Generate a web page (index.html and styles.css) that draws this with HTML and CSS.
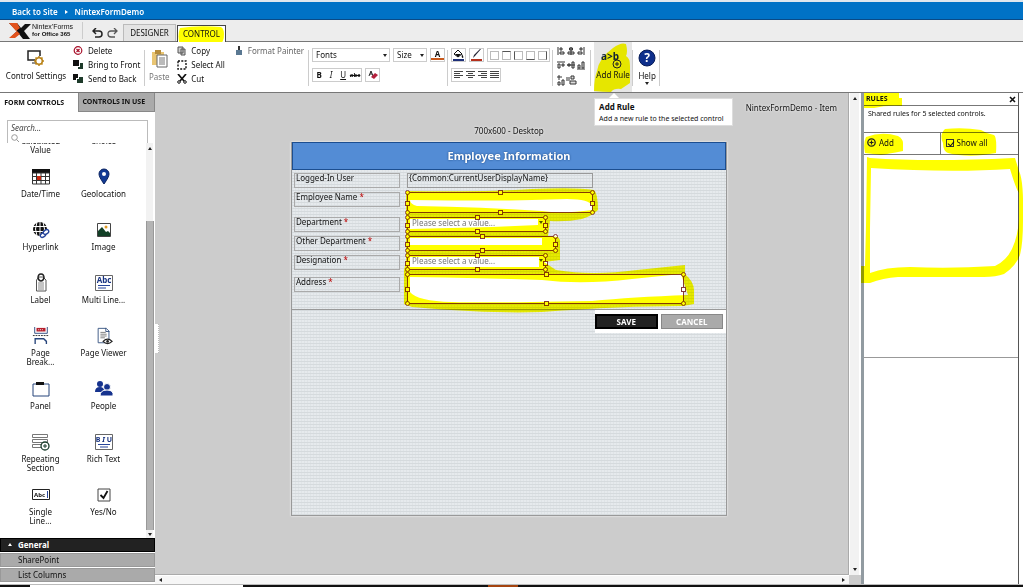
FILE: index.html
```html
<!DOCTYPE html>
<html lang="en">
<head>
    <meta charset="UTF-8">
    <meta name="viewport" content="width=device-width, initial-scale=1.0">
    <link rel="stylesheet" href="styles.css">
    <title>Nintex Forms - NintexFormDemo</title>
</head>
<body>
    <nav class="sitebar">
        <a href="#">Back to Site</a>
        <span class="sitebar__arrow"></span>
        <a href="#">NintexFormDemo</a>
    </nav>

    <header class="tabs">
        <div class="logo">
            <svg width="22" height="16" viewBox="0 0 22 16"><path d="M0 0h8l4 5 4-4h6l-7 7 6 8h-7l-4-5-5 4H1l7-7z" fill="#111"/><path d="M0 0h8l3 5-4 3zM8 8l3 3-5 4H0z" fill="#e2531d"/></svg>
            <span class="logo__text">Nintex'Forms<br><b>for Office 365</b></span>
        </div>
        <button class="undo" aria-label="Undo"><svg width="11" height="11" viewBox="0 0 11 11"><path d="M4 0L1 3l3 3M1 3h6q3 0 3 3t-3 3H3" fill="none" stroke="#222" stroke-width="1.5"/></svg></button>
        <button class="undo" aria-label="Redo"><svg width="11" height="11" viewBox="0 0 11 11"><path d="M7 0l3 3-3 3M10 3H4Q1 3 1 6t3 3h4" fill="none" stroke="#555" stroke-width="1.3"/></svg></button>
        <button class="tab">DESIGNER</button>
        <button class="tab tab--active">
            <svg class="marker" width="47" height="20" viewBox="0 0 47 20"><path d="M2 2Q20-1 43 1q3 2 3 7 0 8-4 10-18 2-40 1Q-1 10 2 2z"/></svg>
            <span>CONTROL</span>
        </button>
    </header>

    <section class="ribbon">
        <div class="group group--first">
            <button class="big big--settings">
                <svg width="18" height="18" viewBox="0 0 18 18"><path d="M8 11H1V2h12v5" fill="none" stroke="#222" stroke-width="1.5"/><path d="M5 14h4" stroke="#222"/><circle cx="12" cy="12" r="3.3" fill="#fff" stroke="#b98318" stroke-width="1.6"/><path d="M12 7v2m0 6v2M7 12h2m6 0h2M8.500 8.500l1.500 1.500m4 4l1.500 1.500m0-7L14 10m-4 4l-1.500 1.500" stroke="#b98318" stroke-width="1.500"/></svg>
                <span>Control Settings</span>
            </button>
            <div class="stack">
                <button class="cmd"><svg width="11" height="10" viewBox="0 0 11 10"><circle cx="5" cy="4.500" r="3.800" fill="#fff" stroke="#a8102a" stroke-width="1.200"/><path d="M3.500 3l3 3m0-3l-3 3" stroke="#a8102a" stroke-width="1.200"/></svg>Delete</button>
                <button class="cmd"><svg width="11" height="10" viewBox="0 0 11 10"><path d="M0 0h6v6H0z" fill="#111"/><path d="M7 3h3v6H5V7h2z" fill="#1d3a2a"/></svg>Bring to Front</button>
                <button class="cmd"><svg width="11" height="10" viewBox="0 0 11 10"><path d="M0 0h5v4H3v2H0z" fill="#111"/><path d="M6 3h4v6H4V5h2z" fill="#1d3a2a"/></svg>Send to Back</button>
            </div>
        </div>
        <div class="group">
            <button class="big big--off">
                <svg width="17" height="19" viewBox="0 0 17 19"><path d="M1 3h12v13H1z" fill="#e9c573"/><path d="M4 1h6v4H4z" fill="#b58c3c"/><path d="M6 6h10v12H6z" fill="#fff" stroke="#666"/><path d="M8 9h6m-6 2h6m-6 2h6m-6 2h6" stroke="#777"/></svg>
                <span>Paste</span>
            </button>
            <div class="stack">
                <button class="cmd"><svg width="10" height="10" viewBox="0 0 10 10"><path d="M1 1h5v6H1zM4 3h4v6H4z" fill="#ccc" stroke="#555"/></svg>Copy</button>
                <button class="cmd"><svg width="10" height="10" viewBox="0 0 10 10"><path d="M1 1h8v8H1z" fill="none" stroke="#111" stroke-width="1.400" stroke-dasharray="2 1.300"/></svg>Select All</button>
                <button class="cmd"><svg width="10" height="10" viewBox="0 0 10 10"><path d="M1 0l6 7M9 0L3 7" stroke="#111" stroke-width="1.700"/><circle cx="2" cy="8" r="1.300" fill="none" stroke="#111"/><circle cx="8" cy="8" r="1.300" fill="none" stroke="#111"/></svg>Cut</button>
            </div>
            <div class="stack">
                <button class="cmd cmd--off"><svg width="10" height="10" viewBox="0 0 10 10"><path d="M4 0h2v4H4z" fill="#333"/><path d="M2 4h6v5H2z" fill="#5a7892"/></svg>Format Painter</button>
            </div>
        </div>
        <div class="group">
            <div class="tools">
                <div class="tools__row">
                    <label class="picker picker--fonts"><select aria-label="Fonts"><option>Fonts</option></select></label>
                    <label class="picker picker--size"><select aria-label="Size"><option>Size</option></select></label>
                    <button class="tool tool--color">A</button>
                </div>
                <div class="tools__row">
                    <div class="toolset">
                        <button><b>B</b></button><button><i>I</i></button><button><u>U</u></button><button><s>abc</s></button>
                    </div>
                    <button class="tool" aria-label="Clear format"><svg width="10" height="10" viewBox="0 0 10 10"><path d="M1 6l2-5 2 5M2 4h2" fill="none" stroke="#222"/><path d="M3 7l4-4 3 2-4 4z" fill="#b3203c"/></svg></button>
                </div>
            </div>
        </div>
        <div class="group">
            <div class="tools">
                <div class="tools__row">
                    <button class="tool" aria-label="Fill"><svg width="11" height="12" viewBox="0 0 11 12"><path d="M1 5l4-4 4 4-4 3z" fill="#fff" stroke="#111"/><path d="M2 5h6L5 8zM9 5q2 3 1 4-2 0-1-4z" fill="#111"/><path d="M0 10h11v2H0z" fill="#1d2f78"/></svg></button>
                    <button class="tool" aria-label="Line colour"><svg width="11" height="12" viewBox="0 0 11 12"><path d="M10 0L4 7 2 9l1-3 6-6z" fill="#223"/><path d="M0 10h11v2H0z" fill="#b5301c"/></svg></button>
                    <div class="toolset toolset--boxes">
                        <button class="bx" aria-label="No border"></button><button class="bx bx--t" aria-label="Top border"></button><button class="bx bx--l" aria-label="Left border"></button><button class="bx bx--b" aria-label="Bottom border"></button><button class="bx bx--r" aria-label="Right border"></button>
                    </div>
                </div>
                <div class="tools__row">
                    <div class="toolset">
                        <button aria-label="Left"><svg width="9" height="8" viewBox="0 0 9 8"><path d="M0 .5h9M0 2.500h6M0 4.500h9M0 6.500h6" stroke="#444"/></svg></button>
                        <button aria-label="Centre"><svg width="9" height="8" viewBox="0 0 9 8"><path d="M0 .5h9M2 2.500h5M0 4.500h9M2 6.500h5" stroke="#444"/></svg></button>
                        <button aria-label="Right"><svg width="9" height="8" viewBox="0 0 9 8"><path d="M0 .5h9M3 2.500h6M0 4.500h9M3 6.500h6" stroke="#444"/></svg></button>
                        <button aria-label="Justify"><svg width="9" height="8" viewBox="0 0 9 8"><path d="M0 .5h9M0 2.500h9M0 4.500h9M0 6.500h9" stroke="#444"/></svg></button>
                    </div>
                </div>
            </div>
        </div>
        <div class="group group--align">
            <div class="aligns">
                <button aria-label="Align edges"><svg width="30" height="9" viewBox="0 0 30 9"><g fill="#ddd" stroke="#333"><path d="M1 0v8M3 1h2v2H3zM3 5h4v2H3z"/><path d="M14 0v8M12.500 1h3v2h-3zM11 5h6v2h-6z"/><path d="M27 0v8M23 1h2v2h-2zM21 5h4v2h-4z"/></g></svg></button>
                <button aria-label="Align middle"><svg width="30" height="9" viewBox="0 0 30 9"><g fill="#ddd" stroke="#333"><path d="M0 1h8M1 3h2v4H1zM5 3h2v2H5z"/><path d="M10 4h8M11 3h2v2h-2zM15 1h2v6h-2z"/><path d="M20 8h8M21 4h2v3h-2zM25 1h2v6h-2z"/></g></svg></button>
                <button aria-label="Same size"><svg width="20" height="11" viewBox="0 0 20 11"><g fill="#ddd" stroke="#333"><path d="M1 7h2v3H1zM5 5h2v5H5zM2 0v5M0 2h5"/><path d="M9 3h4M9 5h4M14 1h3v3h-3zM13 6h6v3h-6z"/></g></svg></button>
            </div>
        </div>
        <div class="group group--rule">
            <button class="big big--rule">
                <svg class="marker" width="38" height="50" viewBox="0 0 38 50"><path d="M19 6q8-6 13-4 2 8 0 12 4 2 4 10v17l-9 6q-7-1-10 3-8 0-17-1 0-12 3-20 2-13 16-23z"/></svg>
                <svg class="ab" width="24" height="18" viewBox="0 0 24 18"><text x="0" y="9" font-size="10" font-weight="bold" fill="#123">a&gt;b</text><circle cx="16" cy="13" r="4" fill="none" stroke="#222"/><path d="M14 13h4m-2-2v4" stroke="#222"/></svg>
                <span>Add Rule</span>
            </button>
            <div class="tip">
                <b>Add Rule</b>
                <p>Add a new rule to the selected control</p>
            </div>
        </div>
        <div class="group group--help">
            <button class="big big--help">
                <svg width="18" height="18" viewBox="0 0 18 18"><circle cx="9" cy="9" r="8" fill="#0e2f8c" stroke="#051a55"/><text x="9" y="13" font-size="12" font-weight="bold" text-anchor="middle" fill="#fff">?</text></svg>
                <span>Help</span>
                <i class="down"></i>
            </button>
        </div>
    </section>

    <main class="work">
        <aside class="side">
            <div class="side__tabs">
                <button class="on">FORM CONTROLS</button>
                <button>CONTROLS IN USE</button>
            </div>
            <div class="search">
                <input type="text" placeholder="Search..." aria-label="Search">
                <svg width="9" height="9" viewBox="0 0 9 9"><circle cx="3.500" cy="3.500" r="2.800" fill="none" stroke="#999"/><path d="M5.500 5.500L8 8" stroke="#999"/></svg>
            </div>
            <div class="side__list">
                <div class="icons">
                    <button class="item"><svg width="18" height="18"></svg>Calculated Value</button>
                    <button class="item"><svg width="18" height="18"></svg>Choice</button>
                    <button class="item"><svg width="18" height="18" viewBox="0 0 18 18"><path d="M0 1h18v4H0z" fill="#111"/><path d="M.5 5h17v11H.5zM0 8.500h18M0 12.500h18M4.500 5v11M9 5v11M13.500 5v11" fill="none" stroke="#333"/><path d="M5 8h4v4H5z" fill="#c8280f"/></svg>Date/Time</button>
                    <button class="item"><svg width="18" height="18" viewBox="0 0 18 18"><path d="M9 16Q4 9 4 6a5 5 0 0 1 10 0q0 3-5 10z" fill="#123a94" stroke="#0a2361"/><circle cx="9" cy="6" r="2" fill="#fff"/></svg>Geolocation</button>
                    <button class="item"><svg width="18" height="18" viewBox="0 0 18 18"><circle cx="8" cy="8" r="7" fill="#111"/><path d="M1 5.500h14M1 10.500h14M8 1v14M5 1Q2 8 5 15M11 1q3 7 0 14" fill="none" stroke="#fff"/><g fill="#fff" stroke="#27459b" stroke-width="1.300"><ellipse cx="11" cy="14" rx="3" ry="2" transform="rotate(-35 11 14)"/><ellipse cx="14" cy="11" rx="3" ry="2" transform="rotate(-35 14 11)"/></g></svg>Hyperlink</button>
                    <button class="item"><svg width="18" height="18" viewBox="0 0 18 18"><path d="M2.500 2.500h13v13h-13z" fill="#fff" stroke="#444"/><path d="M3 10l4-4 4 5 2-1 2 2v3H3z" fill="#123f26"/><circle cx="11" cy="6" r="1.500" fill="#e09b24"/></svg>Image</button>
                    <button class="item"><svg width="18" height="18" viewBox="0 0 18 18"><path d="M4.500 17V6L7 3h4l3 3v11z" fill="#fff" stroke="#555"/><path d="M6 4q0-4 3-4t3 4q-1 3-3 3T6 4z" fill="none" stroke="#222" stroke-width="1.500"/><path d="M6 9h6m-6 2h6m-6 2h6m-6 2h6" stroke="#888"/></svg>Label</button>
                    <button class="item"><svg width="18" height="18" viewBox="0 0 18 18"><path d="M.5 1.500h17v15H.5z" fill="#fff" stroke="#666"/><text x="9" y="9" font-size="8" font-weight="bold" text-anchor="middle" fill="#163180">Abc</text><path d="M3 11.500h12M3 14h8" stroke="#27459b" stroke-width="1.200"/></svg>Multi Line...</button>
                    <button class="item"><svg width="18" height="20" viewBox="0 0 18 20"><path d="M2 0v7h14V0" fill="#fff" stroke="#27457b"/><path d="M4 1h10v4H4z" fill="#b61f2c"/><path d="M6 3h6" stroke="#fff" stroke-dasharray="1 1"/><path d="M0 9.500h18" stroke="#222" stroke-dasharray="2 1"/><path d="M2.500 19v-6H12l3 3v3" fill="#fff" stroke="#27457b" stroke-width="1.500"/></svg>Page Break...</button>
                    <button class="item"><svg width="18" height="20" viewBox="0 0 18 20"><path d="M2.500 1.500h9l3 3v13h-12z" fill="#fff" stroke="#33507f"/><path d="M11 1v4h4" fill="none" stroke="#33507f"/><path d="M5 6h6M5 8h7M5 10h7M5 12h5" stroke="#777"/><path d="M8 16q5-5 10 0-5 5-10 0z" fill="#fff" stroke="#222" stroke-width="1.300"/><circle cx="13" cy="16" r="1.500" fill="#222"/></svg>Page Viewer</button>
                    <button class="item"><svg width="18" height="18" viewBox="0 0 18 18"><path d="M1 4h16v12H1z" fill="#fff" stroke="#27457b"/><path d="M4 2h8v3H4z" fill="#111"/></svg>Panel</button>
                    <button class="item"><svg width="18" height="18" viewBox="0 0 18 18"><g fill="#16338e"><circle cx="5" cy="4" r="3"/><path d="M0 12q0-5 5-5 4 0 5 5z"/><g stroke="#fff"><circle cx="12" cy="7" r="3.500"/><path d="M5 16q0-6 7-6t6 6z"/></g></g></svg>People</button>
                    <button class="item"><svg width="18" height="18" viewBox="0 0 18 18"><path d="M.5 1.500h15v3H.5zM.5 6.500h15v3H.5zM.5 11.500h15v3H.5z" fill="#fff" stroke="#777"/><circle cx="13" cy="13" r="4" fill="#fff" stroke="#173d2a" stroke-width="1.300"/><path d="M11 13h4m-2-2v4" stroke="#173d2a"/></svg>Repeating Section</button>
                    <button class="item"><svg width="18" height="18" viewBox="0 0 18 18"><path d="M.5 1.500h17v15H.5z" fill="#fff" stroke="#666"/><text x="9" y="9" font-size="7" font-weight="bold" text-anchor="middle" fill="#163180">B <tspan font-style="italic">I</tspan> U</text><path d="M3 11.500h12M5 14h8" stroke="#27459b" stroke-width="1.200"/></svg>Rich Text</button>
                    <button class="item"><svg width="18" height="18" viewBox="0 0 18 18"><path d="M.5 3.500h17v10H.5z" fill="#fff" stroke="#222"/><text x="2" y="11" font-size="6" font-weight="bold" fill="#111">Abc</text><path d="M15.500 5v7" stroke="#27459b"/></svg>Single Line...</button>
                    <button class="item"><svg width="18" height="18" viewBox="0 0 18 18"><path d="M3 3h12v12H3z" fill="#fff" stroke="#444"/><path d="M5.500 9l3 3 4-7" fill="none" stroke="#111" stroke-width="1.800"/></svg>Yes/No</button>
                </div>
                <div class="vbar vbar--side"><i class="up"></i><div class="vbar__thumb"></div><i class="down"></i></div>
            </div>
            <ul class="accordion">
                <li><button class="open">General</button></li>
                <li><button>SharePoint</button></li>
                <li><button>List Columns</button></li>
            </ul>
        </aside>

        <section class="canvas">
            <div class="canvas__view">
                <p class="canvas__name">NintexFormDemo - Item</p>
                <p class="canvas__size">700x600 - Desktop</p>
                <form class="sheet">
                    <h1>Employee Information</h1>
                    <div class="rows">
                        <div class="row"><span class="row__label">Logged-In User</span><span class="field field--plain">{Common:CurrentUserDisplayName}</span></div>
                        <div class="row row--mid"><label class="row__label" for="name">Employee Name <em>*</em></label><span class="field picked"><input id="name" type="text"></span></div>
                        <div class="row"><label class="row__label" for="dept">Department <em>*</em></label><span class="field field--select picked"><select id="dept"><option>Please select a value...</option></select></span></div>
                        <div class="row"><label class="row__label" for="other">Other Department <em>*</em></label><span class="field field--other picked"><input id="other" type="text"></span></div>
                        <div class="row"><label class="row__label" for="desig">Designation <em>*</em></label><span class="field field--select picked"><select id="desig"><option>Please select a value...</option></select></span></div>
                        <div class="row row--tall"><label class="row__label" for="addr">Address <em>*</em></label><span class="field field--address picked"><textarea id="addr"></textarea></span></div>
                        <svg class="marker" width="435" height="144" viewBox="0 0 435 144">
                            <path fill-rule="evenodd" d="M114 21Q200 22 240 19 285 17 302 20 306 24 306 40 300 46 290 49 275 52 258 51L256 66 266 67 268 70V90L252 92 264 100Q300 106 345 100L393 95V104Q402 112 402 120V134L391 136Q330 136 250 142 200 144 120 137L112 134V100L114 92z
                                M118 30Q200 31 240 30L275 29Q298 29 300 36V40Q270 44 250 41 190 37 125 36 118 34 118 30z
                                M118 49H246V55L200 57 118 59z
                                M118 68H250V75H118z
                                M118 87H247V97H118z
                                M118 107Q190 108 250 110 290 115 340 109L389 104 396 125Q340 127 300 131 200 133 160 132 125 131 118 122z"/>
                        </svg>
                    </div>
                    <div class="actions">
                        <button type="button" class="save">SAVE</button>
                        <button type="button" class="cancel">CANCEL</button>
                    </div>
                </form>
            </div>
            <div class="vbar"><i class="up"></i><i class="down"></i></div>
            <div class="hbar"><i class="left"></i><i class="right"></i></div>
            <span class="grip"></span>
        </section>

        <aside class="rules">
            <div class="rules__head">
                <svg class="marker" width="38" height="15" viewBox="0 0 38 15"><path d="M0 0h35v5h3v8q-16-1-28 2H0z"/></svg>
                <h2>RULES</h2>
                <button aria-label="Close"><svg width="7" height="7" viewBox="0 0 7 7"><path d="M1 1l5 5m0-5L1 6" stroke="#111" stroke-width="1.600"/></svg></button>
            </div>
            <p class="rules__note">Shared rules for 5 selected controls.</p>
            <div class="rules__bar">
                <div class="rules__cell">
                    <svg class="marker" width="39" height="22" viewBox="0 0 39 22"><path d="M2 4Q18-2 34 3q5 3 5 7v8q-16 3-22 4L1 20Q-1 10 2 4z"/></svg>
                    <button><svg width="9" height="9" viewBox="0 0 9 9"><circle cx="4.500" cy="4.500" r="3.700" fill="none" stroke="#222" stroke-width="1.300"/><path d="M2.500 4.500h4m-2-2v4" stroke="#222" stroke-width="1.200"/></svg>Add</button>
                </div>
                <div class="rules__cell rules__cell--show">
                    <svg class="marker marker--show" width="56" height="28" viewBox="0 0 56 28"><path d="M4 1q18-2 36 1 6 4 13 5 3 2 2 18l-13 2q-20 2-35-2-5-2-5-10-4-8 2-14z"/></svg>
                    <label><input type="checkbox" checked>Show all</label>
                </div>
            </div>
            <div class="rules__list">
                <svg class="marker marker--list" width="163" height="128" viewBox="0 0 163 128"><path fill-rule="evenodd" d="M6 1l3 1q60 4 143 0h2l4 13q5 10 4 50 0 22-3 34-4 11-16 19-8 3-20 3H37q-15 1-28 6H0v-17h4L5 70zM10 12l-1 60v45q15-6 40-6 40 2 85-1 11-5 17-17 6-13 7-30V37q-3-4-9-24-60 4-139-1z"/></svg>
            </div>
        </aside>
    </main>
    <footer class="edge"></footer>

    <script>
        // Drag handles round every selected control
        const places = ['nw', 'n', 'ne', 'e', 'se', 's', 'sw', 'w'];
        document.querySelectorAll('.picked').forEach((field) => {
            places.forEach((place) => {
                let handle = document.createElement('i');
                handle.className = 'handle handle--' + place;
                field.appendChild(handle);
            });
        });
    </script>
</body>
</html>
```
FILE: styles.css
```css
*{box-sizing: border-box; margin: 0; padding: 0;}

body{height: 100vh; display: flex; flex-direction: column; overflow: hidden; font: 8px/14px "Noto Sans", sans-serif; color: #111; background: #fff;}
button, input, select, textarea{font: inherit; color: inherit; background: none; border: 0; outline: 0; border-radius: 0;}
button{cursor: pointer; white-space: nowrap;}
svg{display: block; flex: none;}
select{appearance: none; width: 100%; height: 100%;}

.marker{position: absolute; top: 0; left: 0; fill: #ff0; mix-blend-mode: multiply; pointer-events: none;}
.up, .down, .left, .right{width: 0; height: 0; border: 2px solid transparent;}
.up{border-top: 0; border-bottom: 3px solid #222;}
.down{border-bottom: 0; border-top: 3px solid #222;}
.left{border-left: 0; border-right: 3px solid #222;}
.right{border-right: 0; border-left: 3px solid #222;}

/* Top bars */
.sitebar{height: 20px; flex: none; display: flex; align-items: center; gap: 7px; padding: 2px 12px 0; background: #0072c6; border-top: 2px solid #dfe7ee; border-bottom: 1px solid #0a4a86;}
.sitebar a{color: #fff; text-decoration: none; font-weight: 600;}
.sitebar__arrow{border: 2px solid transparent; border-left: 3px solid #fff; border-right: 0;}

.tabs{height: 22px; flex: none; display: flex; align-items: flex-end; padding-left: 9px; background: #ededed; border-bottom: 1px solid #777;}
.logo{display: flex; align-items: center; gap: 1px; width: 74px; height: 17px; margin-bottom: 2px; margin-right: 9px; border-right: 1px solid #ccc;}
.logo__text{font: 7px/7px "Liberation Sans", sans-serif; color: #111; white-space: nowrap;}
.logo__text b{font-size: 6px;}
.undo{width: 15px; height: 16px;}
.tab{position: relative; height: 17px; width: 53px; margin-left: 1px; background: #e4e4e4; border: 1px solid #bbb; border-bottom: 0;}
.tab span{position: relative;}
.tab--active{width: 49px; margin-bottom: -1px; background: #fff; border-color: #444;}

/* Ribbon */
.ribbon{position: relative; z-index: 3; height: 51px; flex: none; display: flex; border-bottom: 1px solid #777; background: #fff;}
.group{position: relative; display: flex; flex: none; padding: 2px 3px 0; gap: 7px;}
.group::after{content: ""; position: absolute; right: 0; top: 8px; height: 36px; border-right: 1px solid #ccc;}
.group--first{padding-left: 6px;}
.big{position: relative; display: flex; flex-direction: column; align-items: center; padding-top: 5px; gap: 2px; height: 48px;}
.big span{position: relative;}
.big--settings{width: 60px;}
.big--off{width: 22px; color: #777;}
.stack{display: flex; flex-direction: column;}
.cmd{display: flex; align-items: center; gap: 4px; height: 14px; padding-right: 2px;}
.cmd--off{color: #666;}

.tools{display: flex; flex-direction: column; gap: 6px; padding-top: 4px;}
.tools__row{display: flex; gap: 3px; height: 14px;}
.picker{position: relative; border: 1px solid #ccc;}
.picker select{display: block; padding-left: 3px; line-height: 12px;}
.picker::after{content: ""; position: absolute; right: 2px; top: 5px; border: 2px solid transparent; border-top: 3px solid #222; border-bottom: 0;}
.picker--fonts{width: 78px;}
.picker--size{width: 34px;}
.tool{width: 15px; display: flex; align-items: center; justify-content: center; border: 1px solid #ccc;}
.tool--color{padding-bottom: 3px; font-weight: bold; line-height: 9px; box-shadow: inset 0 -1px #fff, inset 0 -3px #c9591c;}
.toolset{display: flex; border: 1px solid #ccc;}
.toolset button{width: 12px; display: flex; align-items: center; justify-content: center;}
.toolset s{font-size: 6px; font-weight: bold;}
.toolset--boxes{gap: 3px; padding: 2px; align-items: center;}
.toolset .bx{width: 9px; height: 9px; border: 1px solid #bbb;}
.toolset .bx--t{border-top-color: #555;}
.toolset .bx--l{border-left-color: #555;}
.toolset .bx--b{border-bottom-color: #555;}
.toolset .bx--r{border-right-color: #555;}
.group--align{padding: 2px 4px 0;}
.aligns{display: flex; flex-direction: column; align-items: flex-start; gap: 5px; padding-top: 3px;}

.group--rule{padding: 0 1px 0 3px;}
.big--rule{width: 38px; height: 50px; padding-top: 9px; gap: 0; background: #e6e6e6;}
.ab{position: relative; overflow: visible;}
.big--rule span{margin-top: -1px;}
.tip{position: absolute; top: 56px; left: 3px; width: 139px; height: 28px; padding: 2px 4px; background: #fff; border: 1px solid #ddd; line-height: 12px; white-space: nowrap; color: #111;}
.tip::before{content: ""; position: absolute; left: 14px; top: -6px; border: 5px solid transparent; border-bottom-color: #fff; border-top: 0;}
.tip p{font-size: 7px;}
.group--help{padding-left: 4px;}
.big--help{width: 20px; padding-top: 5px;}
.big .down{margin-top: -3px;}

/* Left panel */
.work{flex: 1; min-height: 0; display: flex;}
.side{width: 155px; flex: none; display: flex; flex-direction: column;}
.side__tabs{display: flex; height: 19px; flex: none; font-size: 7px; font-weight: bold;}
.side__tabs button{width: 78px; padding-right: 5px; font-weight: bold; background: #aaa; border: 1px solid #888; border-top: 0;}
.side__tabs .on{background: #fff; border: 0; padding-right: 9px;}
.search{height: 23px; flex: none; margin: 8px 7px 0; border: 1px solid #bbb; border-bottom: 0; padding-left: 3px;}
.search input{display: block; width: 100%; height: 13px; font-style: italic;}
.search input::placeholder{color: #444; opacity: 1;}
.side__list{flex: 1; min-height: 0; display: flex; overflow: hidden;}
.icons{flex: 1; display: grid; grid-template-columns: 63px 63px; grid-auto-rows: 53px; align-content: start; padding-left: 9px; margin-top: -28px;}
.item{display: flex; flex-direction: column; align-items: center; gap: 3px; white-space: normal; line-height: 9px; padding: 0 8px;}
.item svg{height: 18px; overflow: visible;}
.item:nth-child(even){padding: 0 4px;}

.vbar{display: flex; flex-direction: column; align-items: center; justify-content: space-between; padding: 4px 0; background: #f2f2f2; border-left: 1px solid #fff; border-right: 2px solid #fff;}
.vbar--side{width: 10px; padding: 4px 0 2px;}
.vbar__thumb{flex: 1; width: 8px; margin: 71px 0 3px; background: #b4b4b4; border: 1px solid #999; border-width: 0 1px;}

.accordion{list-style: none; flex: none; padding-bottom: 1px;}
.accordion button{display: block; position: relative; width: 100%; height: 14px; margin-bottom: 1px; padding-left: 17px; text-align: left; background: #aaa; border: 1px solid #999; line-height: 12px;}
.accordion .open{background: #222; border: 1px solid #000; color: #fff; font-weight: bold;}
.accordion .open::before{content: ""; position: absolute; left: 7px; top: 4px; border: 2px solid transparent; border-bottom: 3px solid #fff; border-top: 0;}

/* Form canvas */
.canvas{position: relative; flex: 1; min-width: 0; display: grid; grid-template-columns: 1fr 12px; grid-template-rows: 1fr 9px; background: #ccc;}
.canvas__view{min-width: 0; padding: 8px 0 0 15px; overflow: hidden; border-bottom: 1px solid #aaa; border-right: 1px solid #aaa;}
.canvas__name{padding-right: 11px; text-align: right; text-shadow: 0 0 3px #fff;}
.canvas__size{margin: 9px 0 4px; text-align: center; text-shadow: 0 0 3px #fff;}
.hbar{display: flex; justify-content: space-between; align-items: center; padding: 0 4px; background: #f6f6f6; border-top: 1px solid #fff;}
.grip{position: absolute; left: 0; top: 231px; width: 4px; height: 29px; background: #fff; border-right: 1px dotted #bbb;}

.sheet{width: 436px; height: 374px; margin: 0 auto; border: 1px solid #999; border-top: 0; background: repeating-linear-gradient(90deg, #d5dadd66 0 1px, transparent 1px 3px), repeating-linear-gradient(#d5dadd 0 1px, #e6eaed 1px 3px); box-shadow: 0 0 2px #fff;}
.sheet h1{height: 28px; font-size: 11px; line-height: 26px; text-align: center; color: #fff; background: #538cd5; border: 1px solid #1c4e90; text-shadow: 0 0 2px #123c75;}
.rows{position: relative; display: flex; flex-direction: column; gap: 4px; height: 140px; padding: 3px 3px 0 2px; border-bottom: 1px solid #999;}
.row{display: flex; gap: 7px; height: 15px;}
.row--mid{height: 21px;}
.row--tall{height: 30px;}
.row--tall .row__label{margin-top: 3px;}
.row__label{width: 106px; height: 15px; padding-left: 1px; border: 1px solid #aaa; line-height: 8px;}
.row__label em{color: #b00; font-style: normal;}
.field{position: relative; display: block; width: 186px; height: 100%; background: #fff;}
.field--plain{background: none; border: 1px solid #999; padding-left: 1px; line-height: 8px;}
.field--select{width: 139px; color: #777;}
.field--select::after{content: ""; position: absolute; right: 3px; top: 4px; border: 2px solid transparent; border-top: 3px solid #555; border-bottom: 0;}
.field--other{width: 149px;}
.field--address{width: 277px;}
.field input, .field textarea{display: block; width: 100%; height: 100%; resize: none;}
.field select{display: block; height: 12px; padding-left: 5px; line-height: 12px;}
.picked{outline: 1px solid #853b3b; outline-offset: -1px;}
.handle{position: absolute; width: 5px; height: 5px; background: #fff; border: 1px solid #853b3b;}
.handle--nw, .handle--ne, .handle--se, .handle--sw{border-radius: 50%;}
.handle--nw, .handle--n, .handle--ne{top: -2px;}
.handle--sw, .handle--s, .handle--se{bottom: -2px;}
.handle--nw, .handle--w, .handle--sw{left: -2px;}
.handle--ne, .handle--e, .handle--se{right: -2px;}
.handle--n, .handle--s{left: calc(50% - 2px);}
.handle--e, .handle--w{top: calc(50% - 2px);}

.actions{display: flex; justify-content: flex-end; gap: 3px; width: 131px; margin-left: auto; padding: 4px 3px 4px 0; background: #fff;}
.actions button{flex: 1 1 0; height: 15px; line-height: 11px; font-weight: bold; color: #fff;}
.save{background: #222; box-shadow: inset 0 0 0 2px #000;}
.cancel{background: #aaa; box-shadow: inset 0 0 0 1px #888;}

/* Rules panel */
.rules{width: 158px; flex: none; margin-right: 4px; border-left: 3px solid #929ba1; border-right: 1px solid #555;}
.rules__head{position: relative; display: flex; align-items: center; justify-content: space-between; height: 13px; padding: 0 2px; border-bottom: 1px solid #777;}
.rules__head h2{position: relative; font-size: 7px; line-height: 12px;}
.rules__note{height: 27px; padding: 1px 4px; font-size: 7px; border-bottom: 1px solid #777; white-space: nowrap;}
.rules__bar{display: flex; height: 22px; border-bottom: 1px solid #777;}
.rules__cell{position: relative; flex: 1; display: flex; align-items: center; padding: 0 0 2px 3px;}
.rules__cell button, .rules__cell label{position: relative; display: flex; align-items: center; gap: 3px;}
.rules__cell--show{border-left: 1px solid #777; padding-left: 5px;}
.marker--show{top: -5px;}
.rules__cell input{appearance: none; width: 8px; height: 8px; border: 1px solid #333; position: relative;}
.rules__cell input:checked::before{content: ""; position: absolute; left: 2px; top: 0; width: 3px; height: 5px; border: solid #111; border-width: 0 1px 1px 0; transform: rotate(40deg);}
.rules__list{position: relative; height: 203px; border-bottom: 1px solid #999;}
.marker--list{left: -3px; top: 1px;}

.edge{height: 3px; flex: none; border-top: 1px solid #bbb; background: linear-gradient(90deg, #111 30px, #fff 30px 243px, #111 243px 488px, #a4440f 488px 518px, #111 518px);}
```
